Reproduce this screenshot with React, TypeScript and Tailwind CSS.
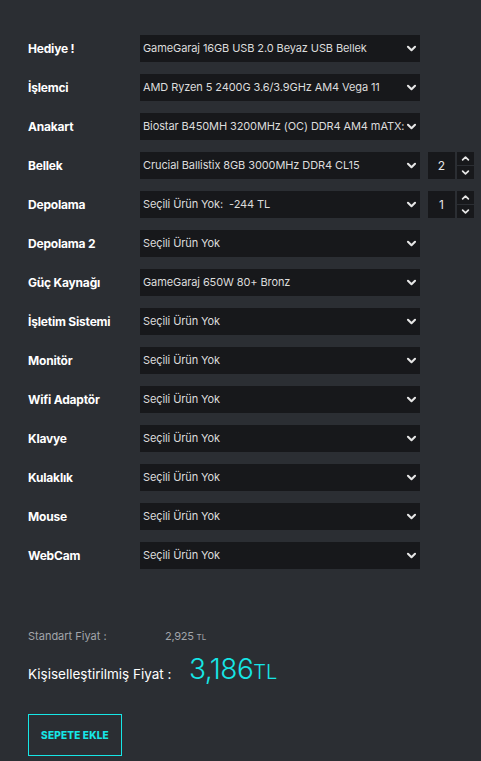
import React from "react";

type Row = { label: string; value: string; qty?: number };

const rows: Row[] = [
  { label: "Hediye !", value: "GameGaraj 16GB USB 2.0 Beyaz USB Bellek" },
  { label: "İşlemci", value: "AMD Ryzen 5 2400G 3.6/3.9GHz AM4 Vega 11" },
  { label: "Anakart", value: "Biostar B450MH 3200MHz (OC) DDR4 AM4 mATX:" },
  { label: "Bellek", value: "Crucial Ballistix 8GB 3000MHz DDR4 CL15", qty: 2 },
  { label: "Depolama", value: "Seçili Ürün Yok:  -244 TL", qty: 1 },
  { label: "Depolama 2", value: "Seçili Ürün Yok" },
  { label: "Güç Kaynağı", value: "GameGaraj 650W 80+ Bronz" },
  { label: "İşletim Sistemi", value: "Seçili Ürün Yok" },
  { label: "Monitör", value: "Seçili Ürün Yok" },
  { label: "Wifi Adaptör", value: "Seçili Ürün Yok" },
  { label: "Klavye", value: "Seçili Ürün Yok" },
  { label: "Kulaklık", value: "Seçili Ürün Yok" },
  { label: "Mouse", value: "Seçili Ürün Yok" },
  { label: "WebCam", value: "Seçili Ürün Yok" },
];

function Chevron({ up = false, size = 11 }: { up?: boolean; size?: number }) {
  return (
    <svg width={size} height={size} viewBox="0 0 10 10" fill="none">
      <path
        d={up ? "M1.8 6.6 L5 3.4 L8.2 6.6" : "M1.8 3.4 L5 6.6 L8.2 3.4"}
        stroke="#e6e6e6"
        strokeWidth="1.9"
        strokeLinecap="round"
        strokeLinejoin="round"
      />
    </svg>
  );
}

function Qty({ n }: { n: number }) {
  return (
    <div className="flex items-center ml-2">
      <div className="w-[27px] h-[27px] bg-[#17181b] flex items-center justify-center text-[12px] text-[#e6e6e6]">
        {n}
      </div>
      <div className="ml-[2px] flex flex-col gap-[1px]">
        <div className="w-[17px] h-[13px] bg-[#17181b] flex items-center justify-center">
          <Chevron up size={9} />
        </div>
        <div className="w-[17px] h-[13px] bg-[#17181b] flex items-center justify-center">
          <Chevron size={9} />
        </div>
      </div>
    </div>
  );
}

export default function App() {
  return (
    <div
      className="w-[481px] h-[761px] bg-[#2b2e33] overflow-hidden"
      style={{ fontFamily: "Inter, 'Noto Sans', sans-serif" }}
    >
      <div className="pt-[35px] pl-[28px] flex flex-col gap-[12px]">
        {rows.map((r) => (
          <div key={r.label} className="flex items-center h-[27px]">
            <div className="w-[112px] text-[12px] font-bold text-white tracking-[-0.2px]">
              {r.label}
            </div>
            <div className="w-[280px] h-[27px] bg-[#17181b] flex items-center justify-between pl-[3px] pr-[3px]">
              <span className="text-[11px] text-[#dcdcdc] whitespace-pre tracking-[-0.1px]">
                {r.value}
              </span>
              <Chevron />
            </div>
            {r.qty !== undefined && <Qty n={r.qty} />}
          </div>
        ))}
      </div>

      <div className="pl-[28px] mt-[59px]">
        <div className="flex items-baseline h-[14px]">
          <span className="w-[137px] text-[11px] text-[#a2a5aa]">Standart Fiyat :</span>
          <span className="text-[11px] text-[#a2a5aa] tracking-[-0.3px]">2,925</span>
          <span className="text-[8px] text-[#a2a5aa] ml-[3px]">TL</span>
        </div>
        <div className="flex items-baseline mt-[12px]">
          <span className="w-[161px] text-[13.5px] text-white">Kişiselleştirilmiş Fiyat :</span>
          <span className="text-[28px] leading-[30px] text-[#16e6e6] font-light tracking-[-0.5px]">3,186</span>
          <span className="text-[20px] text-[#16e6e6] font-light">TL</span>
        </div>
        <button className="mt-[27px] w-[94px] h-[42px] border border-[#16e6e6] flex items-center justify-center text-[10px] font-extrabold text-[#16e6e6] tracking-[0.2px]">
          SEPETE EKLE
        </button>
      </div>
    </div>
  );
}
